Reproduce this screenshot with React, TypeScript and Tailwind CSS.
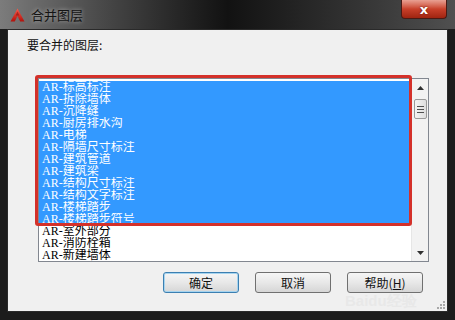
import React from 'react';

const LAYERS = [
    'AR-标高标注',
    'AR-拆除墙体',
    'AR-沉降缝',
    'AR-厨房排水沟',
    'AR-电梯',
    'AR-隔墙尺寸标注',
    'AR-建筑管道',
    'AR-建筑梁',
    'AR-结构尺寸标注',
    'AR-结构文字标注',
    'AR-楼梯踏步',
    'AR-楼梯踏步符号',
    'AR-室外部分',
    'AR-消防栓箱',
    'AR-新建墙体',
];

const SELECTED_COUNT = 12;

const LIST_FONT = "font-['Liberation_Serif','Noto_Sans_CJK_SC',serif]";

function AppIcon() {
    // red AutoCAD style "A" triangle
    return (
        <svg width="15" height="14" viewBox="0 0 15 14">
            <defs>
                <linearGradient id="acad" x1="0" y1="0" x2="0" y2="1">
                    <stop offset="0" stopColor="#ff5a4a" />
                    <stop offset="1" stopColor="#b0120c" />
                </linearGradient>
            </defs>
            <path d="M7.5 0.5 L14.5 13.5 L10.2 13.5 L7.5 8 L4.8 13.5 L0.5 13.5 Z" fill="url(#acad)" />
            <path d="M7.5 3.5 L9.3 7.5 L5.7 7.5 Z" fill="#7a0a06" opacity="0.5" />
        </svg>
    );
}

function Button({ label, focused }: { label: React.ReactNode; focused?: boolean }) {
    return (
        <div
            className={`w-[76px] h-[21px] rounded-[3px] border flex items-center justify-center text-[12px] text-[#111] bg-gradient-to-b from-[#f6f6f6] via-[#e8e8e8] to-[#d6d6d6] ${
                focused ? 'border-[#3c7fb1] shadow-[inset_0_0_0_1px_#a6d4ef]' : 'border-[#707070]'
            }`}
        >
            {label}
        </div>
    );
}

function ScrollBar() {
    return (
        <div className="w-[17px] h-full bg-[#f2f2f2] border-l border-[#e6e6e6] flex flex-col items-center">
            <div className="h-[17px] w-full flex items-center justify-center">
                <svg width="7" height="4" viewBox="0 0 7 4">
                    <path d="M0 4 L3.5 0 L7 4 Z" fill="#303030" />
                </svg>
            </div>
            <div className="mt-[3px] w-[13px] h-[20px] rounded-[2px] border border-[#9a9a9a] bg-gradient-to-r from-[#f4f4f4] to-[#dedede] flex flex-col items-center justify-center gap-[2px]">
                <div className="w-[7px] h-px bg-[#505050]" />
                <div className="w-[7px] h-px bg-[#505050]" />
                <div className="w-[7px] h-px bg-[#505050]" />
            </div>
            <div className="flex-1" />
            <div className="h-[17px] w-full flex items-center justify-center">
                <svg width="7" height="4" viewBox="0 0 7 4">
                    <path d="M0 0 L7 0 L3.5 4 Z" fill="#303030" />
                </svg>
            </div>
        </div>
    );
}

export default function App() {
    return (
        <div className="relative w-[455px] h-[320px] overflow-hidden bg-[#1c1c1c] font-['Noto_Sans_CJK_SC',sans-serif]">
            {/* title bar */}
            <div className="h-[29px] flex items-start bg-gradient-to-r from-[#7c7c7c] via-[#121212] to-[#505050]">
                <div className="h-[29px] flex items-center pl-[10px] gap-[6px]">
                    <AppIcon />
                    <span className="text-[13px] leading-none text-[#141414] [text-shadow:0_0_4px_rgba(255,255,255,0.55)]">
                        合并图层
                    </span>
                </div>
                <div className="flex-1" />
                {/* close button */}
                <div className="mr-[8px] w-[46px] h-[19px] rounded-b-[4px] border border-t-0 border-[#4a1a14] bg-gradient-to-b from-[#e8a093] via-[#c8402a] to-[#a02410] flex items-center justify-center">
                    <span className="text-[13px] font-bold leading-none text-white font-['DejaVu_Sans',sans-serif] [text-shadow:0_0_2px_#5a0a00]">
                        x
                    </span>
                </div>
            </div>

            {/* client area */}
            <div className="mx-[7px] h-[283px] border border-[#2a2a2a] bg-[#f0f0f0] flex flex-col">
                <div className="mt-[9px] pl-[19px] text-[12px] leading-[12px] text-[#111]">要合并的图层:</div>

                {/* list box */}
                <div className="mt-[27px] ml-[30px] w-[391px] h-[184px] border border-[#828790] bg-white flex">
                    <div className={`flex-1 pt-[2px] ${LIST_FONT}`}>
                        {LAYERS.map((name, i) => (
                            <div
                                key={name}
                                className={`h-[12px] overflow-hidden pl-[3px] text-[12px] leading-[12px] whitespace-nowrap ${
                                    i < SELECTED_COUNT ? 'bg-[#3399ff] text-white' : 'text-black'
                                }`}
                            >
                                {name}
                            </div>
                        ))}
                    </div>
                    <ScrollBar />
                </div>

                {/* buttons */}
                <div className="mt-[10px] pr-[24px] flex justify-end gap-[16px]">
                    <Button label="确定" focused />
                    <Button label="取消" />
                    <Button
                        label={
                            <span>
                                帮助(<span className="underline">H</span>)
                            </span>
                        }
                    />
                </div>

                <div className="flex-1" />
                {/* size grip */}
                <div className="self-end mr-[2px] mb-[2px] grid grid-cols-3 gap-[1px]">
                    <div className="w-[2px] h-[2px]" />
                    <div className="w-[2px] h-[2px]" />
                    <div className="w-[2px] h-[2px] bg-[#a8a8a8]" />
                    <div className="w-[2px] h-[2px]" />
                    <div className="w-[2px] h-[2px] bg-[#a8a8a8]" />
                    <div className="w-[2px] h-[2px] bg-[#a8a8a8]" />
                    <div className="w-[2px] h-[2px] bg-[#a8a8a8]" />
                    <div className="w-[2px] h-[2px] bg-[#a8a8a8]" />
                    <div className="w-[2px] h-[2px] bg-[#a8a8a8]" />
                </div>
            </div>

            {/* red highlight annotation over the selection */}
            <div className="absolute left-[35px] top-[75px] w-[377px] h-[151px] border-[3px] border-[#d4312a] rounded-[3px]" />

            {/* faint watermark */}
            <div className="absolute left-[345px] top-[290px] text-[15px] font-bold text-[#d8d8d8] opacity-30 font-['Liberation_Sans',sans-serif]">
                Baidu经验
            </div>
        </div>
    );
}
